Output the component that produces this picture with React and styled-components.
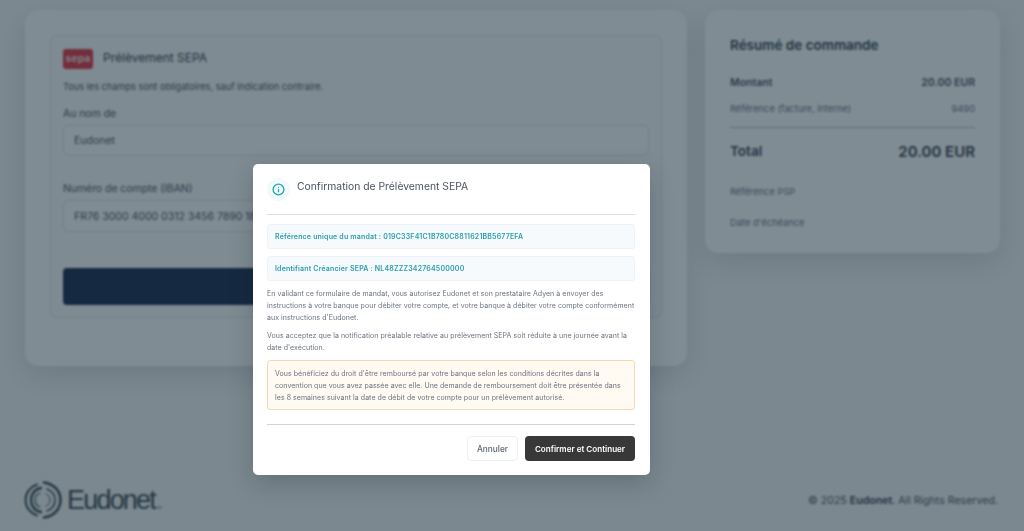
import styled, { createGlobalStyle } from "styled-components";

const GlobalStyle = createGlobalStyle`
  html, body { margin: 0; padding: 0; height: 100%; overflow: hidden; }
  body { font-family: Inter, "Liberation Sans", sans-serif; background: #e6edf1; }
  * { box-sizing: border-box; }
`;

const Page = styled.div`
  height: 531px;
  padding: 10px 24px 0 25px;
  display: flex;
  flex-direction: column;
`;

const Columns = styled.div`
  display: flex;
  align-items: flex-start;
  gap: 18px;
`;

const Card = styled.section`
  width: ${(p) => p.$width}px;
  height: ${(p) => p.$height}px;
  padding: ${(p) => p.$padding};
  background: #eff5f9;
  border-radius: 14px;
  box-shadow: 0 10px 28px rgba(30, 50, 70, 0.14);
`;

const Method = styled.div`
  height: 283px;
  padding: 12px;
  border: 1px solid #d3dce3;
  border-radius: 6px;
  background: #ecf2f6;
`;

const MethodHead = styled.div`
  display: flex;
  align-items: center;
  gap: 10px;
  height: 21px;
`;

const SepaBadge = styled.div`
  width: 30px;
  height: 20px;
  border-radius: 3px;
  background: #d4364c;
  color: #e6d2d6;
  font-size: 10.5px;
  font-weight: 700;
  display: flex;
  align-items: center;
  justify-content: center;
`;

const MethodTitle = styled.h2`
  margin: 0 0 2px;
  font-size: 12px;
  font-weight: 400;
  color: #334155;
`;

const Hint = styled.p`
  margin: 12px 0 0;
  font-size: 9.2px;
  line-height: 12px;
  color: #475569;
`;

const Label = styled.label`
  display: block;
  margin: ${(p) => p.$top}px 0 4px;
  font-size: 10.4px;
  line-height: 14px;
  color: #475569;
`;

const Field = styled.input`
  display: block;
  width: 586px;
  height: ${(p) => p.$height}px;
  padding: 0 10px;
  border: 1px solid #d0d9e0;
  border-radius: 6px;
  background: #eff5f8;
  font: 400 10.5px Inter, "Liberation Sans", sans-serif;
  color: #475569;
  outline: none;
`;

const PayButton = styled.div`
  width: 586px;
  height: 37px;
  margin-top: 36px;
  border-radius: 4px;
  background: #193153;
`;

const SummaryTitle = styled.h2`
  margin: 0 0 22px;
  font-size: 13.5px;
  line-height: 16px;
  font-weight: 600;
  color: #334155;
`;

const Row = styled.div`
  display: flex;
  justify-content: space-between;
  align-items: center;
  height: ${(p) => p.$height}px;
  font-size: ${(p) => p.$size}px;
  font-weight: ${(p) => p.$weight};
  color: ${(p) => p.$color};
`;

const BigValue = styled.span`
  font-size: 15px;
`;

const Rule = styled.div`
  height: 1px;
  margin: 0 0 11px;
  background: #a8b5c2;
`;

const Muted = styled.div`
  margin-top: ${(p) => p.$top}px;
  font-size: 9.3px;
  line-height: 12px;
  color: #64748b;
`;

const Footer = styled.footer`
  margin-top: auto;
  height: 62px;
  display: flex;
  justify-content: space-between;
  align-items: center;
`;

const Brand = styled.div`
  display: flex;
  align-items: center;
  gap: 5px;
  margin-left: -1px;
`;

const BrandName = styled.span`
  font-family: "Liberation Sans", sans-serif;
  font-size: 27px;
  letter-spacing: -1.8px;
  color: #374a58;
`;

const Trademark = styled.sup`
  font-size: 3px;
  align-self: flex-end;
  margin: 0 0 9px -3px;
  color: #374a58;
`;

const Copyright = styled.div`
  font-size: 10.6px;
  margin-right: 2px;
  color: #475569;
  b { font-weight: 600; color: #334155; }
`;

const Overlay = styled.div`
  position: fixed;
  inset: 0;
  padding: 164px 0 0 253px;
  background: rgba(17, 35, 45, 0.5);
  backdrop-filter: blur(0.85px);
`;

const Dialog = styled.div`
  width: 397px;
  height: 311px;
  padding: 14px 15px 14px 14px;
  background: #fff;
  border-radius: 5px;
  box-shadow: 0 8px 24px rgba(10, 20, 30, 0.2);
`;

const DialogHead = styled.div`
  display: flex;
  gap: 7px;
  height: 36px;
  border-bottom: 1px solid #d9dde1;
  box-sizing: content-box;
`;

const IconRound = styled.div`
  width: 23px;
  height: 23px;
  border-radius: 50%;
  background: #f3fafc;
  display: flex;
  align-items: center;
  justify-content: center;
`;

const DialogTitle = styled.h3`
  margin: 0;
  font-size: 10.35px;
  line-height: 17px;
  font-weight: 400;
  color: #4b5563;
`;

const InfoBox = styled.div`
  height: 25px;
  margin-top: ${(p) => p.$top}px;
  padding: 0 7px;
  display: flex;
  align-items: center;
  border: 1px solid #edf2f6;
  border-radius: 3px;
  background: #f6fafc;
  font-size: 7px;
  font-weight: 600;
  letter-spacing: 0.18px;
  color: #2a9dae;
`;

const Legal = styled.p`
  margin: ${(p) => p.$top}px 0 0;
  font-size: 7px;
  line-height: 12px;
  letter-spacing: 0.05px;
  color: #6b7280;
`;

const Notice = styled.div`
  height: 50px;
  margin-top: 6px;
  padding: 7px 7px;
  border: 1px solid #f7d9ad;
  border-radius: 3px;
  background: #fffaf2;
  font-size: 7px;
  line-height: 12px;
  letter-spacing: 0.05px;
  color: #6b7280;
`;

const Actions = styled.div`
  margin-top: 14px;
  padding-top: 11px;
  border-top: 1px solid #cfd3da;
  display: flex;
  justify-content: flex-end;
  gap: 7px;
`;

const CancelButton = styled.button`
  width: 51px;
  height: 25px;
  padding: 0;
  border: 1px solid #eef1f4;
  border-radius: 4px;
  background: #fff;
  font: 500 8.3px Inter, "Liberation Sans", sans-serif;
  color: #5b6472;
`;

const ConfirmButton = styled.button`
  width: 110px;
  height: 25px;
  padding: 0;
  border: 0;
  border-radius: 4px;
  background: #383838;
  font: 600 8.1px Inter, "Liberation Sans", sans-serif;
  color: #fff;
`;

const App = () => {
  return (
    <>
      <GlobalStyle />
      <Page>
        <Columns>
          <Card $width={662} $height={356} $padding="25px 25px 0">
            <Method>
              <MethodHead>
                <SepaBadge>sepa</SepaBadge>
                <MethodTitle>Prélèvement SEPA</MethodTitle>
              </MethodHead>
              <Hint>Tous les champs sont obligatoires, sauf indication contraire.</Hint>
              <Label $top={14}>Au nom de</Label>
              <Field $height={31} value="Eudonet" readOnly />
              <Label $top={26}>Numéro de compte (IBAN)</Label>
              <Field $height={32} value="FR76 3000 4000 0312 3456 7890 189" readOnly />
              <PayButton />
            </Method>
          </Card>
          <Card $width={295} $height={243} $padding="27px 25px 0">
            <SummaryTitle>Résumé de commande</SummaryTitle>
            <Row $height={14} $size={10.5} $weight={600} $color="#475569">
              <span>Montant</span>
              <span>20.00 EUR</span>
            </Row>
            <Row $height={38} $size={9.3} $weight={400} $color="#64748b">
              <span>Référence (facture, interne)</span>
              <span>9490</span>
            </Row>
            <Rule />
            <Row $height={24} $size={13.5} $weight={600} $color="#334155">
              <span>Total</span>
              <BigValue>20.00 EUR</BigValue>
            </Row>
            <Muted $top={23}>Référence PSP</Muted>
            <Muted $top={19}>Date d'échéance</Muted>
          </Card>
        </Columns>
        <Footer>
          <Brand>
            <svg width="38" height="38" viewBox="0 0 38 38" fill="none" stroke="#374a58" strokeLinecap="round">
              <path d="M20 1.5C30 3 36.5 10 36.5 19S30 35 20 36.5" strokeWidth="2.6" />
              <path d="M13 3.5C6 6 1.5 12 1.5 19S6 32 13 34.5" strokeWidth="2" />
              <path d="M17 7C11 8 7 13 7 19s4 11 10 12" strokeWidth="2.4" />
              <path d="M23 8c5 2 8 6 8 11s-3 9-8 11" strokeWidth="1.6" />
              <path d="M16 12c-3 1-5 4-5 7s2 6 5 7" strokeWidth="1.2" />
              <path d="M22 13c3 1 4 3 4 6s-1 5-4 6" strokeWidth="1" />
            </svg>
            <BrandName>Eudonet</BrandName>
            <Trademark>TM</Trademark>
          </Brand>
          <Copyright>© 2025 <b>Eudonet</b>. All Rights Reserved.</Copyright>
        </Footer>
      </Page>
      <Overlay>
        <Dialog>
          <DialogHead>
            <IconRound>
              <svg width="13" height="13" viewBox="0 0 24 24" fill="none" stroke="#22a5b8" strokeWidth="2.4" strokeLinecap="round">
                <circle cx="12" cy="12" r="10" />
                <path d="M12 16v-4M12 8h.01" />
              </svg>
            </IconRound>
            <DialogTitle>Confirmation de Prélèvement SEPA</DialogTitle>
          </DialogHead>
          <InfoBox $top={9}>Référence unique du mandat : 019C33F41C1B780C8811621BB5677EFA</InfoBox>
          <InfoBox $top={7}>Identifiant Créancier SEPA : NL48ZZZ342764500000</InfoBox>
          <Legal $top={7}>
            En validant ce formulaire de mandat, vous autorisez Eudonet et son prestataire Adyen à envoyer des
            instructions à votre banque pour débiter votre compte, et votre banque à débiter votre compte conformément
            aux instructions d'Eudonet.
          </Legal>
          <Legal $top={6}>
            Vous acceptez que la notification préalable relative au prélèvement SEPA soit réduite à une journée avant la
            date d'exécution.
          </Legal>
          <Notice>
            Vous bénéficiez du droit d'être remboursé par votre banque selon les conditions décrites dans la
            convention que vous avez passée avec elle. Une demande de remboursement doit être présentée dans
            les 8 semaines suivant la date de débit de votre compte pour un prélèvement autorisé.
          </Notice>
          <Actions>
            <CancelButton>Annuler</CancelButton>
            <ConfirmButton>Confirmer et Continuer</ConfirmButton>
          </Actions>
        </Dialog>
      </Overlay>
    </>
  );
};

export default App;
